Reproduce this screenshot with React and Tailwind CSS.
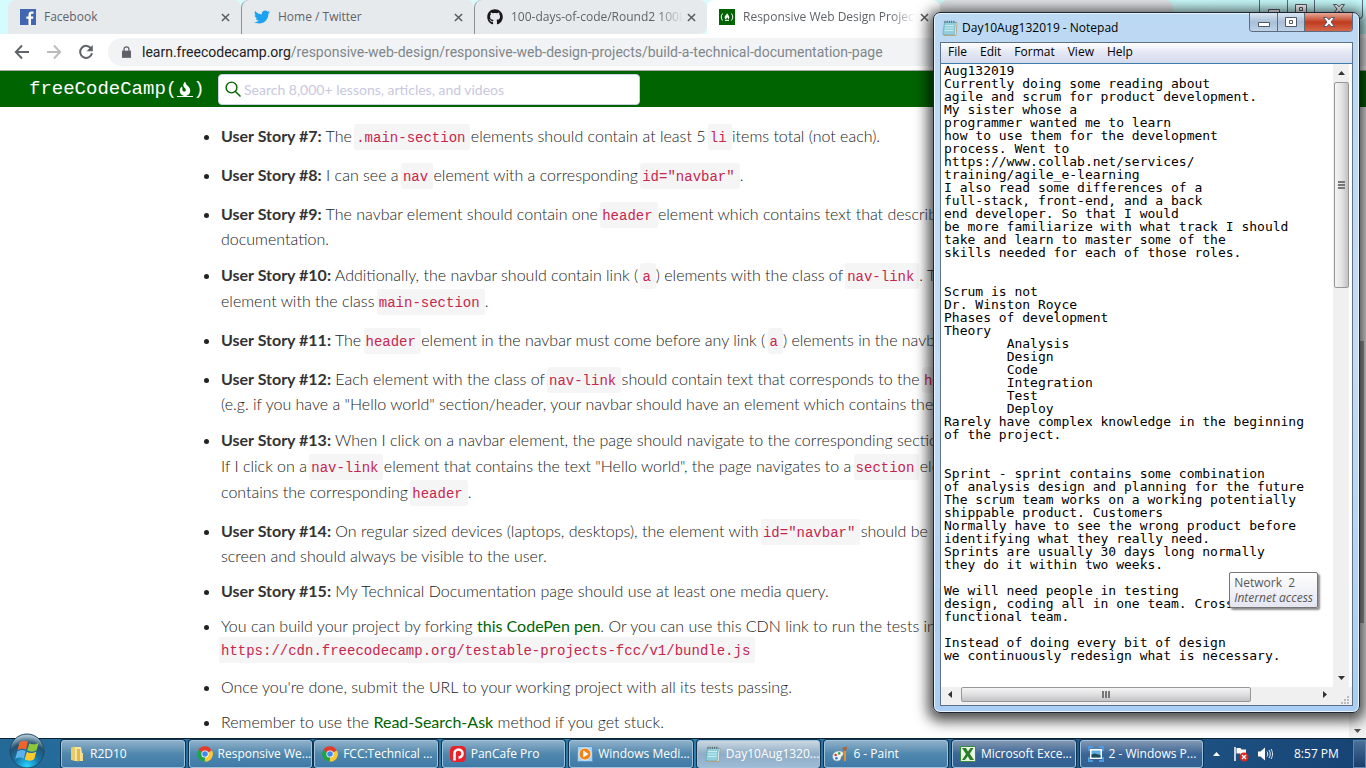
import React from "react";
import { FaTwitter, FaGithub, FaFire } from "react-icons/fa";

const UI = "font-['Open_Sans',sans-serif]";

function Code({ tail, children }) {
  return (
    <code
      className={`-ml-[2px] inline-block rounded-[3px] bg-[#f5f5f5] pt-[3px] pr-[5px] pb-[1px] pl-[2px] font-['Liberation_Mono',monospace] text-[14px] leading-[22px] text-[#c7254e] ${tail ? "" : "-mr-[4px]"}`}
    >
      {children}
    </code>
  );
}

function Link({ children }) {
  return (
    <a href="#top" className="font-normal text-[#006400]">
      {children}
    </a>
  );
}

function Story({ n, children }) {
  return (
    <li className="mb-[13px]">
      <b className="font-bold text-[#333]">User Story #{n}:</b> {children}
    </li>
  );
}

function Stories() {
  return (
    <ul className="list-disc pt-[17px] pl-[221px] text-[16px] leading-[22px] font-light whitespace-nowrap text-[#222]">
      <Story n={7}>
        The <Code>.main-section</Code> elements should contain at least 5 <Code>li</Code> items total (not each).
      </Story>
      <Story n={8}>
        I can see a <Code>nav</Code> element with a corresponding <Code tail>id="navbar"</Code>.
      </Story>
      <Story n={9}>
        The navbar element should contain one <Code>header</Code> element which contains text that describes
        <br />
        documentation.
      </Story>
      <Story n={10}>
        Additionally, the navbar should contain link ( <Code tail>a</Code>) elements with the class of <Code tail>nav-link</Code>. There
        <br />
        element with the class <Code tail>main-section</Code>.
      </Story>
      <Story n={11}>
        The <Code>header</Code> element in the navbar must come before any link ( <Code tail>a</Code>) elements in the navbar.
      </Story>
      <Story n={12}>
        Each element with the class of <Code>nav-link</Code> should contain text that corresponds to the <Code>header</Code>
        <br />
        (e.g. if you have a "Hello world" section/header, your navbar should have an element which contains the
      </Story>
      <Story n={13}>
        When I click on a navbar element, the page should navigate to the corresponding section of <Code tail>main-doc</Code>
        <br />
        If I click on a <Code>nav-link</Code> element that contains the text "Hello world", the page navigates to a <Code>section</Code> element
        <br />
        contains the corresponding <Code tail>header</Code>.
      </Story>
      <Story n={14}>
        On regular sized devices (laptops, desktops), the element with <Code>id="navbar"</Code> should be
        <br />
        screen and should always be visible to the user.
      </Story>
      <Story n={15}>My Technical Documentation page should use at least one media query.</Story>
      <li className="mb-[13px]">
        You can build your project by forking <Link>this CodePen pen</Link>. Or you can use this CDN link to run the tests in
        <br />
        <Code tail>https://cdn.freecodecamp.org/testable-projects-fcc/v1/bundle.js</Code>
      </li>
      <li className="mb-[13px]">Once you're done, submit the URL to your working project with all its tests passing.</li>
      <li className="mb-[13px]">
        Remember to use the <Link>Read-Search-Ask</Link> method if you get stuck.
      </li>
    </ul>
  );
}

function Close() {
  return (
    <svg viewBox="0 0 10 10" className="size-[9px] shrink-0" aria-hidden="true">
      <path d="M1 1l8 8M9 1l-8 8" stroke="#55595e" strokeWidth="1.6" />
    </svg>
  );
}

function Tab({ icon, title, fade, className }) {
  return (
    <div className={`flex h-[34px] shrink-0 items-center gap-2 pl-[12px] pr-[11px] text-[12px] text-[#5f6368] ${className}`}>
      {icon}
      <span className={`-mr-1 w-0 grow whitespace-nowrap ${fade ? "[mask-image:linear-gradient(to_right,black_85%,transparent)]" : ""}`}>{title}</span>
      <button aria-label={`Close ${title}`} className="flex">
        <Close />
      </button>
    </div>
  );
}

function FacebookIcon() {
  return (
    <svg viewBox="0 0 16 16" className="size-4 shrink-0">
      <path d="M0 0h16v16H0z" fill="#4267b2" />
      <path d="M11 16V9.8h2.1l.3-2.4H11V5.9c0-.7.2-1.2 1.2-1.2h1.3V2.5c-.2 0-1-.1-1.9-.1-1.9 0-3.1 1.1-3.1 3.2v1.8H6.4v2.4h2.1V16z" fill="#fff" />
    </svg>
  );
}

function FccIcon() {
  return (
    <svg viewBox="0 0 16 16" className="size-4 shrink-0">
      <path d="M0 0h16v16H0z" fill="#006400" />
      <path d="M3.6 4.5C1.8 6.5 1.8 9.5 3.6 11.5M12.4 4.5c1.8 2 1.8 5 0 7M6 11.4h4" stroke="#fff" strokeWidth="1" fill="none" />
      <path d="M8 4c.3 1.5 2.5 2.5 2.3 4.6-.1 1.2-.8 1.8-1.6 2 .6-1 .3-1.7-.5-2.4-.1.9-1 1.2-.8 2.4-2.2-.7-2-2.9-1-4C7.2 5.8 7.9 5 8 4z" fill="#fff" />
    </svg>
  );
}

function NavArrow({ flip, color }) {
  return (
    <svg viewBox="0 0 16 16" className={`size-[16px] ${flip ? "rotate-180" : ""}`}>
      <path d="M8 1.5L1.8 8 8 14.5M2 8h13" fill="none" stroke={color} strokeWidth="1.9" />
    </svg>
  );
}

function Browser() {
  return (
    <main className="flex min-h-0 flex-1 flex-col bg-white">
      <header className={UI}>
        <div className="flex h-[34px] bg-linear-to-r from-[#d5fcfd] via-[#dcfbfb] to-[#c5fafb] pl-[8px]">
          <Tab className="w-[233px] rounded-t-lg bg-[#e7eaed]" icon={<FacebookIcon />} title="Facebook" />
          <Tab
            className="w-[233px] rounded-t-lg border-l border-[#8d9194] bg-[#e7eaed]"
            icon={<FaTwitter className="size-4 shrink-0 text-[#1da1f2]" />}
            title="Home / Twitter"
          />
          <Tab
            className="w-[233px] rounded-t-lg rounded-br-lg border-l border-[#8d9194] bg-[#e7eaed]"
            icon={<FaGithub className="size-4 shrink-0 text-[#191717]" />}
            title="100-days-of-code/Round2 100D"
            fade
          />
          <Tab className="w-[233px] rounded-t-lg bg-white" icon={<FccIcon />} title="Responsive Web Design Project" fade />
          <div className="w-[233px] rounded-t-lg bg-[#e2e5e8]" />
          <div className="ml-auto flex h-[16px] pr-[3px]">
            <WindowButtons />
          </div>
        </div>
        <div className="flex h-[36px] items-center gap-4 pl-[14px]">
          <button aria-label="Back"><NavArrow color="#5f6368" /></button>
          <button aria-label="Forward"><NavArrow flip color="#babcbe" /></button>
          <button aria-label="Reload">
            <svg viewBox="0 0 16 16" className="size-[16px]">
              <path d="M13.3 4.8A6 6 0 1 0 14 9.2" fill="none" stroke="#5f6368" strokeWidth="2" />
              <path d="M14.8 1v6.3H8.5z" fill="#5f6368" />
            </svg>
          </button>
          <div className="-ml-[2px] flex h-[28px] flex-1 items-center gap-[11px] rounded-l-full bg-[#f1f3f4] pl-[14px] font-['Roboto',sans-serif] text-[14px] text-[#80868b]">
            <svg viewBox="0 0 10 13" className="h-[12px] w-[9px]">
              <path d="M0 5h10v8H0z" fill="#5f6368" />
              <path d="M2.3 6V3.5a2.7 2.7 0 0 1 5.4 0V6" fill="none" stroke="#5f6368" strokeWidth="1.4" />
            </svg>
            <span className="whitespace-nowrap">
              <span className="text-[#202124]">learn.freecodecamp.org</span>/responsive-web-design/responsive-web-design-projects/build-a-technical-documentation-page
            </span>
          </div>
        </div>
      </header>
      <nav className="flex h-[37px] shrink-0 items-center border-t border-[#a5aaa8] bg-[#006400] pl-[29px]">
        <a href="#top" className="flex w-[189px] items-center font-['Liberation_Mono',monospace] text-[19px] text-white">
          <span>freeCodeCamp(</span>
          <span className="flex flex-col items-center border-b border-white px-[1px]">
            <FaFire className="size-[14px]" />
          </span>
          <span>)</span>
        </a>
        <label className="flex h-[31px] w-[422px] items-center gap-[3px] rounded-[4px] border border-[#c8cfe0] bg-white pl-[6px]">
          <svg viewBox="0 0 16 16" className="size-[16px]" aria-label="Search">
            <circle cx="6.5" cy="6.5" r="5.4" fill="none" stroke="#006400" strokeWidth="1.4" />
            <path d="M10.5 10.5l5 5" stroke="#006400" strokeWidth="1.5" />
          </svg>
          <input
            aria-label="Search"
            placeholder="Search 8,000+ lessons, articles, and videos"
            className="min-w-0 flex-1 text-[14px] outline-none placeholder:text-[#c8c8de]"
          />
        </label>
      </nav>
      <div className="flex min-h-0 flex-1">
        <div className="min-w-0 flex-1 overflow-hidden">
          <Stories />
        </div>
        <div className="flex w-[17px] flex-col items-center bg-[#f1f1f1] pb-[5px]">
          <div className="mt-[234px] h-[282px] w-[13px] bg-[#a8a8a8]" />
          <svg viewBox="0 0 7 4" className="mt-auto h-[4px] w-[7px]"><path d="M0 0h7L3.5 4z" fill="#505050" /></svg>
        </div>
      </div>
    </main>
  );
}

function WindowButtons({ active }) {
  const base = "flex items-center justify-center";
  const cool = active ? "bg-linear-to-b from-[#dbe6f2] via-[#a9bfd8] to-[#bdd2e6]" : "";
  const hot = active ? "bg-linear-to-b from-[#e5a898] via-[#c0391c] to-[#d4674a]" : "";
  return (
    <div className="flex h-[19px] overflow-hidden rounded-b-[4px] border border-t-0 border-[#5b6b80]">
      <button aria-label="Minimize" className={`${base} w-[28px] border-r border-[#5b6b80] ${cool}`}>
        <svg viewBox="0 0 12 10" className="h-[10px] w-[12px]"><path d="M.5 5.5h11v4H.5z" fill="#fff" stroke="#535666" /></svg>
      </button>
      <button aria-label="Maximize" className={`${base} w-[27px] border-r border-[#5b6b80] ${cool}`}>
        <svg viewBox="0 0 12 10" className="h-[10px] w-[12px]"><path d="M.5 .5h11v9H.5zM4.5 3.5h3v3h-3z" fill="#fff" stroke="#535666" /></svg>
      </button>
      <button aria-label="Close" className={`${base} w-[47px] ${hot}`}>
        <svg viewBox="0 0 12 10" className="h-[10px] w-[12px]">
          <path d="M.5 .5h3.3L6 2.8 8.2 .5h3.3L8 5l3.5 4.5H8.2L6 7.2 3.8 9.5H.5L4 5z" fill="#fff" stroke="#535666" />
        </svg>
      </button>
    </div>
  );
}

function NotepadIcon() {
  return (
    <svg viewBox="0 0 16 16" className="size-4 shrink-0">
      <path d="M3.5 2.5L15 2.5 14 15.5H2z" fill="#fff" stroke="#a79763" strokeWidth=".8" />
      <path d="M2.5 2H13.5L12.5 14.5H.8z" fill="#8fd0dc" stroke="#5c9fae" strokeWidth=".6" />
      <path d="M3 5.5h9M2.8 8h9M2.6 10.5h9" stroke="#d6f2f5" strokeWidth=".8" />
      <path d="M3 .8v2M5.2 .8v2M7.4 .8v2M9.6 .8v2M11.8 .8v2" stroke="#555" strokeWidth=".9" />
    </svg>
  );
}

const NOTES = `Aug132019
Currently doing some reading about
agile and scrum for product development.
My sister whose a
programmer wanted me to learn
how to use them for the development
process. Went to
https://www.collab.net/services/
training/agile_e-learning
I also read some differences of a
full-stack, front-end, and a back
end developer. So that I would
be more familiarize with what track I should
take and learn to master some of the
skills needed for each of those roles.


Scrum is not
Dr. Winston Royce
Phases of development
Theory
	Analysis
	Design
	Code
	Integration
	Test
	Deploy
Rarely have complex knowledge in the beginning
of the project.


Sprint - sprint contains some combination
of analysis design and planning for the future
The scrum team works on a working potentially
shippable product. Customers
Normally have to see the wrong product before
identifying what they really need.
Sprints are usually 30 days long normally
they do it within two weeks.

We will need people in testing
design, coding all in one team. Cross
functional team.

Instead of doing every bit of design
we continuously redesign what is necessary.`;

function Notepad() {
  return (
    <section
      className={`absolute top-[12px] right-[6px] bottom-[55px] flex w-[427px] flex-col rounded-[7px] border border-[#1c2733] bg-linear-to-b from-[#bcd9f3] via-[#c3dcf5] to-[#a9cdf3] px-[6px] pb-[6px] shadow-[0_0_0_1px_#e8f4ff_inset,0_3px_14px_5px_rgba(0,0,0,0.7)] ${UI}`}
    >
      <div className="flex h-[29px] shrink-0 items-start">
        <div className="flex h-[29px] flex-1 items-center gap-[4px] pl-[2px] text-[12px] leading-[16px] text-black">
          <NotepadIcon />
          Day10Aug132019 - Notepad
        </div>
        <WindowButtons active />
      </div>
      <div className="flex min-h-0 flex-1 flex-col border border-[#5d7287] bg-white">
        <div className="flex h-[20px] shrink-0 items-center gap-[13px] border-b border-[#d5dae8] bg-linear-to-b from-white via-[#e4e8f5] to-[#d6dbee] pb-[2px] pl-[7px] text-[12px] leading-[16px] text-black">
          {["File", "Edit", "Format", "View", "Help"].map((m) => (
            <button key={m}>{m}</button>
          ))}
        </div>
        <div className="flex min-h-0 flex-1 border-t border-[#3c7fb1] pr-[3px]">
          <textarea
            aria-label="Notes"
            readOnly
            wrap="off"
            defaultValue={NOTES}
            className="min-w-0 flex-1 resize-none overflow-hidden pl-[3px] font-['DejaVu_Sans_Mono',monospace] text-[13px] leading-[13px] text-black outline-none [tab-size:8]"
          />
          <div className="flex w-[16px] flex-col items-center bg-[#f0f0f0]">
            <div className="flex h-[18px] items-center">
              <svg viewBox="0 0 7 4" className="h-[4px] w-[7px]"><path d="M0 4h7L3.5 0z" fill="#333" /></svg>
            </div>
            <div className="flex h-[206px] w-[15px] flex-col items-center justify-center gap-[1px] rounded-[2px] border border-[#979797] bg-linear-to-r from-[#f4f4f4] via-[#e4e4e6] to-[#c2c2c6]">
              <i className="h-[2px] w-[7px] bg-[#777]" />
              <i className="h-[2px] w-[7px] bg-[#777]" />
              <i className="h-[2px] w-[7px] bg-[#777]" />
            </div>
            <div className="mt-auto flex h-[18px] items-center">
              <svg viewBox="0 0 7 4" className="h-[4px] w-[7px]"><path d="M0 0h7L3.5 4z" fill="#333" /></svg>
            </div>
          </div>
        </div>
        <div className="flex h-[18px] shrink-0 items-start bg-[#f0f0f0] pr-[2px] pl-[7px]">
          <svg viewBox="0 0 4 7" className="mt-[4px] h-[7px] w-[4px]"><path d="M4 0v7L0 3.5z" fill="#333" /></svg>
          <div className="ml-[9px] flex h-[15px] w-[290px] items-center justify-center gap-[1px] rounded-[2px] border border-[#979797] bg-linear-to-b from-[#f4f4f4] via-[#e0e0e2] to-[#c2c2c6]">
            <i className="h-[7px] w-[2px] bg-[#777]" />
            <i className="h-[7px] w-[2px] bg-[#777]" />
            <i className="h-[7px] w-[2px] bg-[#777]" />
          </div>
          <svg viewBox="0 0 4 7" className="mt-[4px] mr-[13px] ml-auto h-[7px] w-[4px]"><path d="M0 0v7l4-3.5z" fill="#333" /></svg>
          <svg viewBox="0 0 10 10" className="size-[10px] self-end">
            <path d="M7 1h2v2H7zM4 4h2v2H4zM7 4h2v2H7zM1 7h2v2H1zM4 7h2v2H4zM7 7h2v2H7z" fill="#bcbcbc" />
          </svg>
        </div>
      </div>
    </section>
  );
}

function ChromeIcon() {
  return (
    <svg viewBox="0 0 16 16" className="size-4 shrink-0">
      <path d="M8 8L1.4 4A7.5 7.5 0 0 1 14.6 4.4z" fill="#e33b2e" />
      <path d="M8 8l6.9-3.6A7.5 7.5 0 0 1 7.5 15.5z" fill="#fcc934" />
      <path d="M8 8l-.4 7.5A7.5 7.5 0 0 1 1.4 4z" fill="#1ea446" />
      <circle cx="8" cy="8" r="3.6" fill="#fff" />
      <circle cx="8" cy="8" r="2.8" fill="#4285f4" />
    </svg>
  );
}

const icons = {
  folder: (
    <svg viewBox="0 0 16 16" className="size-4 shrink-0">
      <path d="M2 1.5l4-1v14.5l-4-1z" fill="#e9cc6a" /><path d="M6 1h6l1 6v8H6z" fill="#f7e39c" />
      <path d="M8 3h3v12l-3 .5z" fill="#dfb94f" /><path d="M11.5 7h2.5v8h-2.5z" fill="#f5dc86" />
    </svg>
  ),
  chrome: <ChromeIcon />,
  pan: (
    <svg viewBox="0 0 16 16" className="size-4 shrink-0">
      <rect width="16" height="16" rx="4.5" fill="#e8212b" />
      <path d="M4.5 14.5V7.5a4 4 0 1 1 4 4" fill="none" stroke="#fff" strokeWidth="2.6" />
    </svg>
  ),
  media: (
    <svg viewBox="0 0 16 16" className="size-4 shrink-0">
      <path d="M.5 .5h15v15H.5z" fill="#a8d4f2" stroke="#5c98cf" />
      <circle cx="8" cy="8" r="6" fill="#f08418" stroke="#fff" strokeWidth=".7" />
      <path d="M6.2 4.6v6.8L11.5 8z" fill="#fff" />
    </svg>
  ),
  note: <NotepadIcon />,
  paint: (
    <svg viewBox="0 0 16 16" className="size-4 shrink-0">
      <path d="M.6 11.5C0 7.8 3 5 7 5s5 2 4 4-2 1-2 3-2 3-4 3-4-1-4.4-3.5z" fill="#eef4f7" stroke="#7695a5" strokeWidth=".6" />
      <circle cx="3.6" cy="9" r="1.3" fill="#d83b2c" /><circle cx="7.2" cy="7.4" r="1.3" fill="#3fa447" />
      <circle cx="4.4" cy="12.3" r="1.3" fill="#2c75d8" /><path d="M12 5h2v10h-2z" fill="#f08b2a" /><path d="M10 2l5-1.5-.5 4h-3z" fill="#a4653a" />
    </svg>
  ),
  excel: (
    <svg viewBox="0 0 16 16" className="size-4 shrink-0">
      <path d="M.5 .5h15v15H.5z" fill="#e9f5e5" stroke="#3d8b37" />
      <path d="M2 2h4l2 3.5L10.5 2h3L9.8 7.8 14 14h-4L7.7 10.3 5 14H2l4-6z" fill="#2b7d2a" />
    </svg>
  ),
  photo: (
    <svg viewBox="0 0 16 16" className="size-4 shrink-0">
      <path d="M1 5V1h4M11 1h4v4M15 11v4h-4M5 15H1v-4" fill="none" stroke="#4a9be0" strokeWidth="2" />
      <path d="M2 3h12v10H2z" fill="#fff" /><path d="M3.5 4.5h9v7h-9z" fill="#5eaede" /><path d="M3.5 8.5l3-1 6 1.5v2.5h-9z" fill="#1d4a5c" />
    </svg>
  ),
};

function Task({ icon, label, tone = "", className = "" }) {
  return (
    <button
      className={`flex h-[28px] min-w-0 flex-1 items-center gap-[5px] rounded-[3px] border border-[#9fc1da] pl-[7px] text-[12px] leading-[16px] whitespace-nowrap text-white shadow-[0_0_0_1px_#0f3350] ${tone || "bg-linear-to-b from-[#8fb0c9] via-[#4f87ad] to-[#3f7aa8]"} ${className}`}
    >
      {icons[icon]}
      {label}
    </button>
  );
}

function Taskbar() {
  return (
    <footer className={`flex h-[30px] shrink-0 items-center border-t border-[#0d2233] bg-linear-to-r from-[#236a99] via-[#3180ad] to-[#174374] ${UI}`}>
      <button aria-label="Start" className="relative h-[29px] w-[61px] shrink-0">
        <svg viewBox="0 0 36 36" className="absolute -top-[6px] left-[9px] size-[36px]">
          <defs>
            <radialGradient id="orb" cx=".5" cy=".95" r=".9">
              <stop offset="0" stopColor="#25d8ff" /><stop offset=".4" stopColor="#1678ae" /><stop offset=".75" stopColor="#245170" /><stop offset="1" stopColor="#a9c3d0" />
            </radialGradient>
          </defs>
          <circle cx="18" cy="18" r="17" fill="url(#orb)" stroke="#234a63" />
          <path d="M10.5 9.5c3-2.5 6-2.2 8.5-.8L17 16.8c-2.5-1.5-5.5-1.5-8.5.5z" fill="#f0642c" />
          <path d="M20.3 10.2c3 1.4 6 1.5 9.5-.5L27.7 17.1c-3 2-6 2-9.5.5z" fill="#8cc63e" />
          <path d="M8.2 18.6c3-2 6-2 8.5-.5L14.7 25.6c-2.5-1.5-5.5-1.5-8.5.5z" fill="#5db2ec" />
          <path d="M17.8 19c3 1.4 6 1.5 9.5-.5L25.3 26.1c-3 2-6 2-9.5.5z" fill="#fdca2e" />
        </svg>
      </button>
      <div className="flex min-w-0 flex-1 gap-[4px]">
        <Task icon="folder" label="R2D10" />
        <Task icon="chrome" label="Responsive We..." className="-mr-[2px]" />
        <Task icon="chrome" label="FCC:Technical ..." />
        <Task icon="pan" label="PanCafe Pro" />
        <Task icon="media" label="Windows Medi..." />
        <Task icon="note" label="Day10Aug1320..." tone="bg-linear-to-b from-[#ccd8e2] via-[#8fadc6] to-[#9dbbd4]" />
        <Task icon="paint" label="6 - Paint" />
        <Task icon="excel" label="Microsoft Exce..." tone="bg-linear-to-b from-[#8397b0] via-[#3a6596] to-[#315f92]" />
        <Task icon="photo" label="2 - Windows P..." tone="bg-linear-to-b from-[#8397b0] via-[#3a6596] to-[#315f92]" />
      </div>
      <div className="flex w-[163px] shrink-0 items-center pl-[10px] text-[12px] text-white">
        <svg viewBox="0 0 7 4" className="h-[4px] w-[7px]"><path d="M0 4h7L3.5 0z" fill="#fff" /></svg>
        <svg viewBox="0 0 16 16" className="ml-[13px] size-4">
          <path d="M2 1v14" stroke="#fff" strokeWidth="1.5" /><path d="M3.5 2h4l1 1.5H13V9H8L7 7.5H3.5z" fill="#fff" />
          <circle cx="11" cy="11" r="4.5" fill="#d9281e" /><path d="M9 9l4 4M13 9l-4 4" stroke="#fff" strokeWidth="1.4" />
        </svg>
        <svg viewBox="0 0 16 16" className="ml-[8px] size-4">
          <path d="M1 5.5h2.5L8 1.5v13L3.5 10.5H1z" fill="#fff" />
          <path d="M10 5.5c1 1.5 1 3.5 0 5M12 4c1.7 2.5 1.7 5.5 0 8M14 3c2 3 2 7 0 10" fill="none" stroke="#fff" strokeWidth=".9" />
        </svg>
        <time className="ml-[21px] whitespace-nowrap">8:57 PM</time>
        <button aria-label="Show desktop" className="ml-auto h-[28px] w-[13px] border border-[#5f86ab] bg-linear-to-b from-[#4a6f98] to-[#1b3f6d]" />
      </div>
    </footer>
  );
}

export default function App() {
  return (
    <div className="relative flex h-screen flex-col overflow-hidden font-['Lato',sans-serif]">
      <Browser />
      <Notepad />
      <div
        role="tooltip"
        className={`absolute right-[48px] bottom-[160px] rounded-[2px] border border-[#767676] bg-linear-to-b from-white to-[#e4e5f0] px-[4px] py-[2px] text-[12px] leading-[15px] text-[#575757] shadow-[2px_2px_2px_rgba(0,0,0,0.45)] ${UI}`}
      >
        Network &nbsp;2
        <br />
        <i>Internet access</i>
      </div>
      <Taskbar />
    </div>
  );
}
